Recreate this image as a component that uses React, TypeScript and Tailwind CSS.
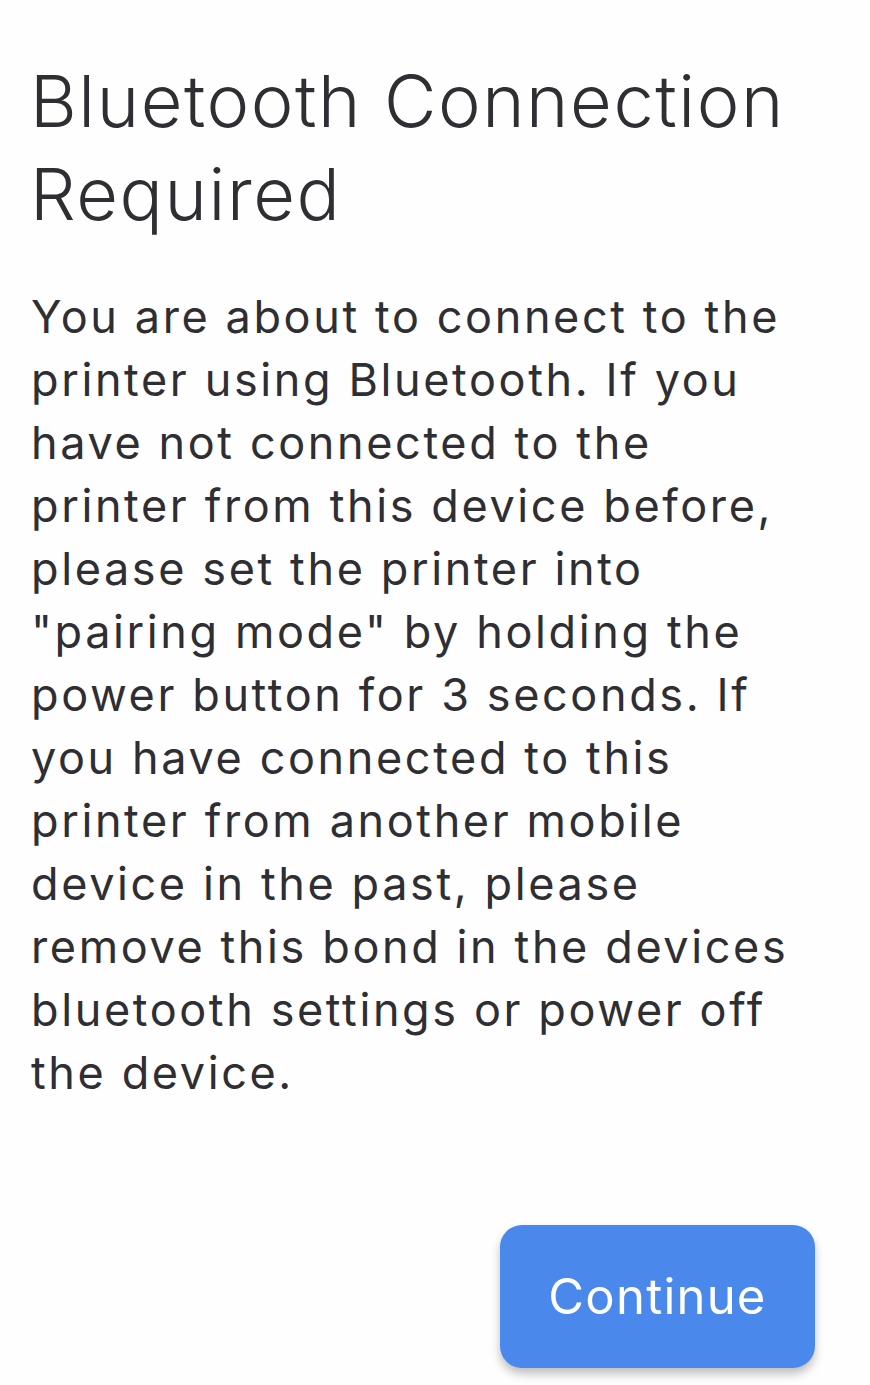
import React from "react";

const lines = [
  "You are about to connect to the",
  "printer using Bluetooth. If you",
  "have not connected to the",
  "printer from this device before,",
  "please set the printer into",
  "\"pairing mode\" by holding the",
  "power button for 3 seconds. If",
  "you have connected to this",
  "printer from another mobile",
  "device in the past, please",
  "remove this bond in the devices",
  "bluetooth settings or power off",
  "the device.",
];

export default function App() {
  return (
    <div
      className="w-[870px] h-[1385px] bg-[#fefefe] text-[#2e2e33] flex flex-col overflow-hidden"
      style={{ fontFamily: "Inter, 'Noto Sans', sans-serif" }}
    >
      <h1 className="pl-[30px] pt-[54px] text-[72px] leading-[93px] font-light tracking-[0.022em]">
        <span className="block whitespace-nowrap">Bluetooth Connection</span>
        <span className="block whitespace-nowrap">Required</span>
      </h1>
      <p className="pl-[31px] mt-[45px] text-[45px] leading-[63px] tracking-[0.058em]">
        {lines.map((l, i) => (
          <span key={i} className="block whitespace-nowrap">
            {l}
          </span>
        ))}
      </p>
      <div className="flex justify-end pr-[55px] mt-[121px]">
        <button className="w-[315px] h-[143px] rounded-[22px] bg-[#4a88ec] text-white text-[49px] tracking-[0.025em] shadow-[0_6px_10px_rgba(0,0,0,0.25)]">
          Continue
        </button>
      </div>
    </div>
  );
}
